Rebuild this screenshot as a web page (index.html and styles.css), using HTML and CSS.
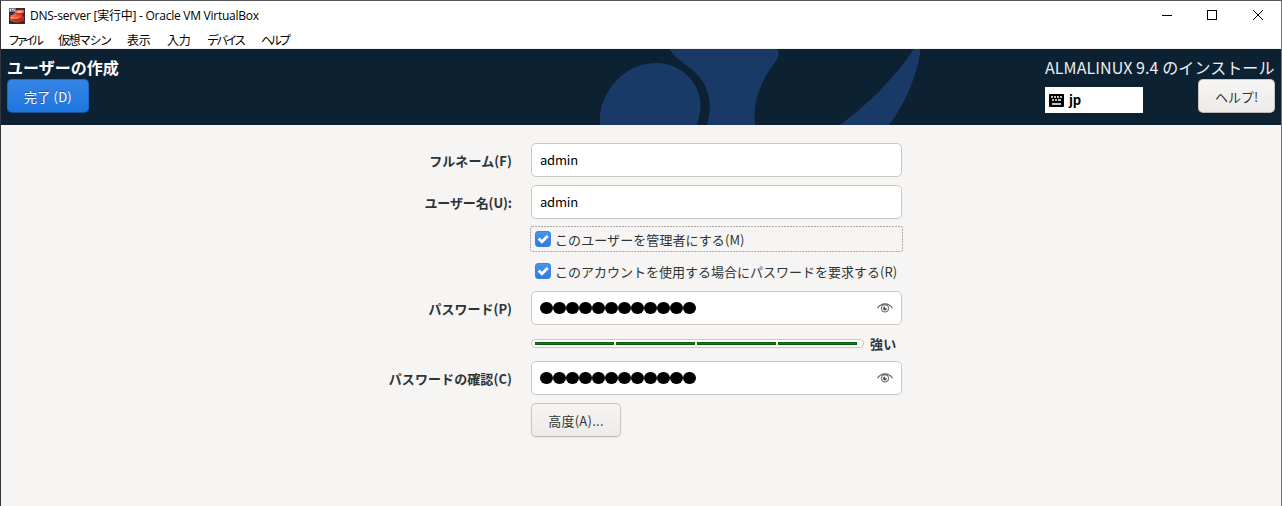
FILE: index.html
```html
<!DOCTYPE html>
<html lang="ja">
<head>
<meta charset="utf-8">
<title>DNS-server [実行中] - Oracle VM VirtualBox</title>
<link rel="stylesheet" href="styles.css">
</head>
<body>
<div class="window">
  <div class="titlebar">
    <svg class="app-icon" width="16" height="16" viewBox="0 0 16 16">
      <defs><linearGradient id="red" x1="0" y1="0" x2="1" y2="1"><stop offset="0" stop-color="#ff9a70"/><stop offset=".45" stop-color="#f0553a"/><stop offset="1" stop-color="#b91a0c"/></linearGradient></defs>
      <rect width="16" height="16" fill="#302b34"/>
      <path d="M0 0H7V4H0Z" fill="#777a84"/><path d="M1 1h1v2H1zM3 1h2v1H3zM5 2h1v1H5z" fill="#e8e8ec"/>
      <path d="M6 3Q9 1 15 2Q16 4 14 6Q12 8 15 9Q16 12 13 13.500Q7 15.500 2 13Q0 10 2 7Q6 7 6 3Z" fill="url(#red)"/>
      <path d="M7 4Q11 2 14.500 3.500Q11 6 7 4ZM2 8.500Q6 11 11 8Q9 11 3 10.500Z" fill="#ffad86"/>
      <path d="M6.500 5.500Q10 7 14 5.500M3 11.800Q8 13.500 14 10.500" fill="none" stroke="#8c180c" stroke-width=".8"/>
    </svg>
    <span class="caption">DNS-server [実行中] - Oracle VM VirtualBox</span>
    <svg class="controls" width="138" height="29" viewBox="0 0 138 29" fill="none" stroke="#000">
      <path d="M19 14.500h10" /><rect x="64.500" y="9.500" width="9" height="9"/><path d="M110 9l10 10M120 9l-10 10"/>
    </svg>
  </div>
  <nav class="menu">
    <span class="m-file">ファイル</span><span class="m-machine">仮想マシン</span><span class="m-view">表示</span><span class="m-input">入力</span><span class="m-device">デバイス</span><span class="m-help">ヘルプ</span>
  </nav>
  <header class="banner">
    <svg class="art" width="360" height="76" viewBox="560 49 360 76" fill="#193a66">
      <path d="M600 125C597 96 622 63 656 63C687 63 704 91 700 112Q699 119 697 125Z"/>
      <path d="M669.500 49H777Q781 54 776 61C761 80 752 103 755 125H707C712 108 710 91 701 79C691 65 677 62 669.500 49Z"/>
      <path d="M914 49H921C916 78 906 102 889 125H840C869 103 893 80 914 49Z"/>
    </svg>
    <div class="bar-left">
      <div class="heading">ユーザーの作成</div>
      <button class="btn primary">完了 (D)</button>
    </div>
    <div class="bar-right">
      <div class="product">ALMALINUX 9.4 のインストール</div>
      <div class="tools">
        <div class="layout">
          <svg width="15" height="13" viewBox="0 0 15 13"><rect width="15" height="13" rx="1" fill="#000"/><path d="M2 3h2M5 3h2M8 3h2M11 3h2M3 6h2M6 6h2M9 6h3M3 10h9" stroke="#fff" stroke-width="1.700"/></svg>
          <b>jp</b>
        </div>
        <button class="btn help">ヘルプ!</button>
      </div>
    </div>
  </header>
  <main class="form">
    <label class="name full">フルネーム(F)</label><div class="entry">admin</div>
    <label class="name user">ユーザー名(U):</label><div class="entry user">admin</div>
    <div class="checks">
      <div class="check focus">
        <svg class="outline" width="373" height="26"><rect x=".5" y=".5" width="372" height="25" rx="1.500"/></svg>
        <svg class="box" width="16" height="16" viewBox="1 1 14 14"><path d="M3.700 7.600L6.900 10.700L12.700 5" /></svg><span class="manage">このユーザーを管理者にする(M)</span>
      </div>
      <div class="check"><svg class="box" width="16" height="16" viewBox="1 1 14 14"><path d="M3.700 7.600L6.900 10.700L12.700 5" /></svg><span>このアカウントを使用する場合にパスワードを要求する(R)</span></div>
    </div>
    <label class="name">パスワード(P)</label>
    <div class="entry secret">
      <div class="dots"><i></i><i></i><i></i><i></i><i></i><i></i><i></i><i></i><i></i><i></i><i></i><i></i></div>
      <svg width="16" height="10" viewBox="0 0 16 10" fill="none" stroke="#5b5f60"><path d="M.4 5.300Q3.500.9 8 .9T15.600 5.300" stroke-width="1.100"/><circle cx="8" cy="5.400" r="3.700" stroke-width="1"/><path d="M8 3.700A1.800 1.800 0 1 0 9.800 5.600H8Z" fill="#444" stroke-width=".4"/></svg>
    </div>
    <div class="strength">
      <div class="meter"><i></i><i></i><i></i><i></i></div><b>強い</b>
    </div>
    <label class="name confirm">パスワードの確認(C)</label>
    <div class="entry secret">
      <div class="dots"><i></i><i></i><i></i><i></i><i></i><i></i><i></i><i></i><i></i><i></i><i></i><i></i></div>
      <svg width="16" height="10" viewBox="0 0 16 10" fill="none" stroke="#5b5f60"><path d="M.4 5.300Q3.500.9 8 .9T15.600 5.300" stroke-width="1.100"/><circle cx="8" cy="5.400" r="3.700" stroke-width="1"/><path d="M8 3.700A1.800 1.800 0 1 0 9.800 5.600H8Z" fill="#444" stroke-width=".4"/></svg>
    </div>
    <button class="btn advanced">高度(A)...</button>
  </main>
</div>
</body>
</html>
```
FILE: styles.css
```css
* { box-sizing: border-box; }
body { margin: 0; font: 13px/20px "Noto Sans CJK JP", sans-serif; color: #2e3436; }
.window { width: 1282px; height: 506px; overflow: hidden; background: #f6f5f4; border: solid; border-width: 1px 1px 0; border-color: #55555a #77777b #55555a #35363b; }

.titlebar { height: 29px; display: flex; align-items: center; background: #fff; color: #000; padding-left: 8px; }
.caption { margin-left: 5px; font: 12px/20px "Open Sans", "Noto Sans CJK JP", sans-serif; letter-spacing: -.25px; white-space: nowrap; }
.controls { margin-left: auto; }
.menu { height: 19px; display: flex; background: #fff; border-bottom: 1px solid #f0f0f0; padding-left: 7px; font-size: 12px; line-height: 20px; color: #000; white-space: nowrap; }
.m-file { width: 50px; letter-spacing: -4px; }
.m-machine { width: 69px; letter-spacing: -1.500px; }
.m-view, .m-input { width: 40px; letter-spacing: -.3px; }
.m-device { width: 54px; letter-spacing: -2.800px; }
.m-help { letter-spacing: -3px; }

.banner { height: 76px; display: flex; justify-content: space-between; background: #0c2233; position: relative; padding: 7px 6px 0; color: #fff; }
.art { position: absolute; left: 559px; top: 0; }
.heading, .product { font-size: 16px; line-height: 22px; height: 23px; white-space: nowrap; }
.heading { font-weight: 700; }
.product { color: #eeeeec; letter-spacing: .09px; }
.bar-right { width: 230px; }
.tools { display: flex; justify-content: space-between; align-items: flex-start; }
.layout { width: 98px; height: 26px; margin-top: 8px; background: #fff; color: #000; display: flex; align-items: center; gap: 5px; padding-left: 4px; }
.layout b { letter-spacing: -.3px; }

.btn { display: block; height: 34px; padding: 1px 0 0; border: 1px solid #cdc7c2; border-bottom-color: #bfb8b1; border-radius: 5px; background: linear-gradient(#f6f5f4, #edebe9); color: #2e3436; font: 13px/20px "Noto Sans CJK JP", sans-serif; box-shadow: 0 1px 2px rgba(0, 0, 0, .08); white-space: nowrap; }
.primary { width: 82px; color: #fff; border-color: #1b6acb; border-bottom-color: #15539e; background: linear-gradient(#3584e4, #1f76e0); text-shadow: 0 -1px rgba(0, 0, 0, .3); letter-spacing: .2px; }
.help { width: 77px; }
.advanced { grid-column: 2; width: 90px; margin-top: 8px; letter-spacing: .25px; }

.form { display: grid; grid-template-columns: 511px 371px; column-gap: 19px; padding-top: 18px; }
.name { text-align: right; font-weight: 700; line-height: 35px; height: 34px; white-space: nowrap; }
.full { letter-spacing: .1px; }
.confirm { letter-spacing: .08px; }
.entry { height: 34px; background: #fff; border: 1px solid #cdc7c2; border-radius: 5px; padding: 0 8px; line-height: 32px; color: #000; letter-spacing: -.2px; }
.user { margin-top: 8px; }
.name.user { letter-spacing: -.1px; }
.checks { grid-column: 2; padding-top: 7px; height: 72px; }
.check { position: relative; width: 373px; height: 26px; margin-left: -1px; padding-left: 5px; display: flex; align-items: center; gap: 4px; margin-bottom: 6px; white-space: nowrap; }
.check span { padding-top: 1px; }
.manage { letter-spacing: .08px; }
.outline { position: absolute; left: 0; top: 0; fill: none; stroke: #aaa9a8; stroke-dasharray: 2 1; }
.box { flex: none; background: linear-gradient(#4a91e8, #2d7de0); border: 1px solid #3b83dc; border-radius: 3px; }
.box path { fill: none; stroke: #fff; stroke-width: 2.800; }
.secret { display: flex; justify-content: space-between; align-items: center; }
.dots { display: flex; gap: .5px; }
.dots i { width: 12.500px; height: 12px; border-radius: 50%; background: #000; }
.strength { grid-column: 2; height: 36px; display: flex; align-items: center; gap: 6px; white-space: nowrap; }
.strength b { padding-top: 1px; letter-spacing: .2px; }
.meter { width: 333px; height: 9px; background: #fff; border: 1px solid #cdc7c2; border-radius: 4px; padding: 2px 6px 2px 3px; display: flex; gap: 2px; }
.meter i { flex: 1; height: 3px; background: #008a00; border: 1px solid #0b5f0b; }
```
